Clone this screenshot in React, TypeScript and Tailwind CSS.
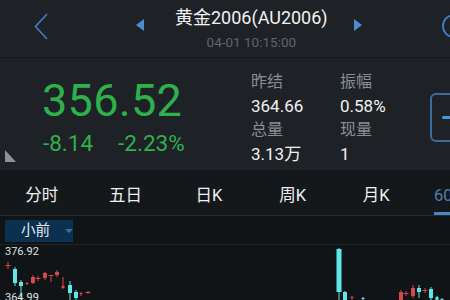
import React from "react";

type Candle = [number, number, number, number, number, "r" | "c", number];

const candles: Candle[] = [
  [8, 262, 269, 265, 266, "r", 5],
  [15, 267, 286, 269, 283, "c", 4],
  [21, 280, 300, 282, 286, "c", 4],
  [27, 282, 285, 283, 284, "r", 3],
  [33, 275, 284, 277, 283, "r", 4],
  [38, 276, 281, 278, 279, "r", 5],
  [45, 272, 280, 273, 278, "r", 4],
  [51, 275, 282, 275, 276, "r", 5],
  [57, 270, 277, 272, 275, "r", 4],
  [63, 277, 289, 286, 288, "r", 3],
  [70, 281, 300, 285, 293, "c", 4],
  [76, 290, 300, 292, 298, "c", 4],
  [81, 292, 296, 293, 294, "r", 3],
  [88, 291, 294, 292, 293, "r", 5],
  [339, 248, 300, 249, 292, "c", 5],
  [345, 291, 300, 292, 300, "c", 4],
  [352, 296, 300, 297, 298, "r", 3],
  [363, 297, 300, 298, 299, "c", 3],
  [401, 290, 300, 292, 300, "r", 4],
  [406, 291, 296, 293, 294, "r", 5],
  [413, 285, 298, 288, 296, "r", 4],
  [419, 285, 298, 288, 292, "c", 4],
  [425, 288, 293, 290, 291, "r", 5],
  [431, 287, 300, 289, 298, "c", 4],
  [437, 296, 300, 297, 300, "c", 3],
  [442, 298, 300, 299, 300, "c", 3],
];

const RED = "#d34848";
const CYAN = "#5ee6e8";

function Chart() {
  return (
    <svg className="absolute inset-0" width={450} height={55} viewBox="0 245 450 55">
      {candles.map(([x, wt, wb, bt, bb, c, w], i) => {
        const col = c === "r" ? RED : CYAN;
        return (
          <g key={i}>
            <line x1={x} x2={x} y1={wt} y2={wb} stroke={col} strokeWidth={1} />
            <rect x={x - w / 2} y={bt} width={w} height={Math.max(1, bb - bt)} fill={col} />
          </g>
        );
      })}
    </svg>
  );
}

export default function App() {
  const font = { fontFamily: 'Roboto, "Noto Sans CJK SC", sans-serif' };
  return (
    <div className="w-[450px] h-[300px] overflow-hidden bg-[#1e2226] flex flex-col" style={font}>
      {/* Header */}
      <div className="h-[57px] flex items-start shrink-0">
        <svg className="ml-[33px] mt-[13px] shrink-0" width={16} height={27} viewBox="0 0 16 27">
          <path d="M14 1 L2.5 13.5 L14 26" fill="none" stroke="#3f7fc2" strokeWidth={1.6} />
        </svg>
        <svg className="ml-[87px] mt-[19px] shrink-0" width={8} height={12} viewBox="0 0 8 12">
          <path d="M8 0 L0 6 L8 12 Z" fill="#4a8cd2" />
        </svg>
        <div className="ml-[31px] mt-[6px] flex flex-col items-center shrink-0 whitespace-nowrap">
          <div className="text-[18px] leading-[24px] text-[#f2f2f2]">黄金2006(AU2006)</div>
          <div className="text-[13.5px] leading-[18px] mt-[3px] text-[#5f656a]">04-01 10:15:00</div>
        </div>
        <svg className="ml-[26px] mt-[19px] shrink-0" width={8} height={12} viewBox="0 0 8 12">
          <path d="M0 0 L8 6 L0 12 Z" fill="#4a8cd2" />
        </svg>
        <svg className="ml-[79px] mt-[13px] shrink-0" width={10} height={26} viewBox="0 0 10 26">
          <circle cx={13} cy={13} r={11} fill="none" stroke="#3f7fc2" strokeWidth={1.8} />
        </svg>
      </div>
      <div className="h-px bg-[#15181b] shrink-0" />

      {/* Quote */}
      <div className="h-[112px] flex shrink-0">
        <div className="w-[42px] shrink-0 flex items-end pb-[8px] pl-[5px]">
          <svg width={11} height={12} viewBox="0 0 11 12">
            <path d="M0 0 L0 12 L11 12 Z" fill="#8d9195" />
          </svg>
        </div>
        <div className="w-[209px] shrink-0 flex flex-col pt-[20px] text-[#2eb04b] whitespace-nowrap">
          <div className="text-[45px] leading-[45px] tracking-[0.3px]">356.52</div>
          <div className="flex mt-[9px] text-[22.5px] leading-[22px] pl-px">
            <span>-8.14</span>
            <span className="ml-[25px]">-2.23%</span>
          </div>
        </div>
        <div className="w-[179px] shrink-0 grid grid-cols-[89px_90px] pt-[12px] text-[17px] leading-[24px] whitespace-nowrap">
          <div className="flex flex-col">
            <span className="text-[16px] text-[#8a8f94]">昨结</span>
            <span className="text-[#f2f2f2]">364.66</span>
            <span className="text-[16px] text-[#8a8f94]">总量</span>
            <span className="text-[#f2f2f2]">3.13万</span>
          </div>
          <div className="flex flex-col">
            <span className="text-[16px] text-[#8a8f94]">振幅</span>
            <span className="text-[#f2f2f2]">0.58%</span>
            <span className="text-[16px] text-[#8a8f94]">现量</span>
            <span className="text-[#f2f2f2]">1</span>
          </div>
        </div>
        <div className="mt-[35px] w-[40px] h-[49px] shrink-0 rounded-[6px] border-2 border-[#3a6c9e] flex items-center justify-center">
          <div className="w-[16px] h-[3px] rounded-full bg-[#4b92d6]" />
        </div>
      </div>

      {/* Tabs */}
      <div className="h-[45px] flex bg-[#14181b] shrink-0 text-[16.5px] leading-[24px] text-[#eef0f2] whitespace-nowrap">
        {["分时", "五日", "日K", "周K", "月K"].map((t) => (
          <div key={t} className="w-[83.6px] shrink-0 flex justify-center pt-[14px]">
            {t}
          </div>
        ))}
        <div className="w-[83.6px] shrink-0 flex justify-center">
          <div className="pt-[14px] h-[45px] border-b-[3px] border-[#4a86c4] text-[#4f7fb0]">60分钟</div>
        </div>
      </div>
      <div className="h-px bg-[#262b2f] shrink-0" />

      {/* Chart area */}
      <div className="flex-1 bg-[#101417] flex flex-col">
        <div className="h-[28px] shrink-0 pl-[5px] pt-[4px]">
          <div className="w-[68px] h-[22px] bg-[#0c3050] flex items-center pl-[16px] text-[14.5px] text-[#e6eaee] leading-[22px] whitespace-nowrap">
            <span>小前</span>
            <svg className="ml-[15px] shrink-0" width={8} height={4} viewBox="0 0 8 4">
              <path d="M0 0 L8 0 L4 4 Z" fill="#3f6f9f" />
            </svg>
          </div>
        </div>
        <div className="h-px bg-[#1e2428] shrink-0" />
        <div className="relative flex-1 overflow-hidden">
          <Chart />
          <div className="relative pl-[5px] text-[11px] leading-[14px] text-[#dfe3e6]">
            <div>376.92</div>
            <div className="mt-[32px]">364.99</div>
          </div>
        </div>
      </div>
    </div>
  );
}
